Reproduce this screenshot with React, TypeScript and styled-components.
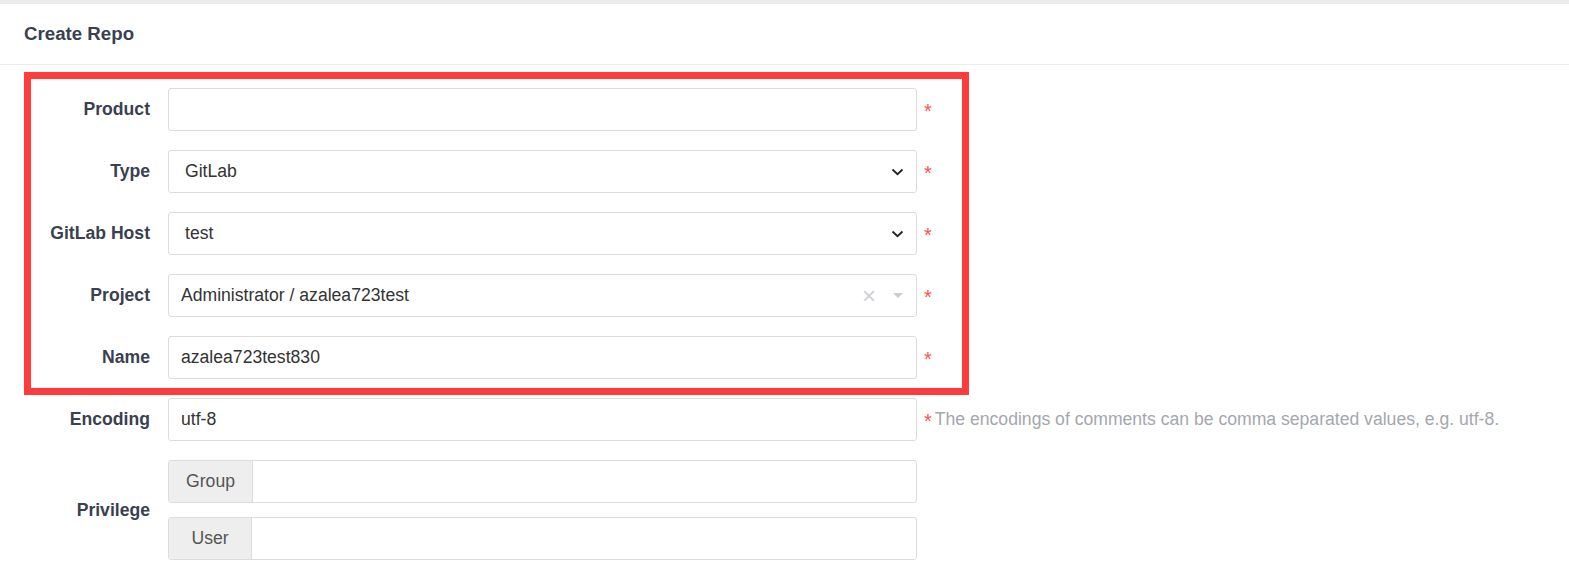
import styled, { createGlobalStyle } from "styled-components";

const GlobalStyle = createGlobalStyle`
  body {
    margin: 0;
    background: #fff;
    font-family: "Liberation Sans", Arial, sans-serif;
    color: #333;
  }
`;

const TopBar = styled.div`
  height: 4px;
  background: #ececec;
`;

const Header = styled.div`
  height: 60px;
  padding: 0 24px;
  display: flex;
  align-items: center;
  border-bottom: 1px solid #ececec;
  font-size: 18.7px;
  font-weight: bold;
  color: #3a3f51;
`;

const FormArea = styled.div`
  position: relative;
  padding-top: 23px;
  display: flex;
  flex-direction: column;
  gap: 19px;
`;

const Highlight = styled.div`
  position: absolute;
  left: 24px;
  top: 7px;
  width: 931px;
  height: 309px;
  border: 7px solid #ff3b3b;
  pointer-events: none;
`;

const Row = styled.div`
  display: grid;
  grid-template-columns: 150px 749px auto;
  column-gap: 18px;
  align-items: center;
`;

const Label = styled.label`
  text-align: right;
  font-size: 17.6px;
  font-weight: bold;
  color: #3a3f51;
`;

const Field = styled.div<{ $pad?: number }>`
  height: 43px;
  box-sizing: border-box;
  border: 1px solid #dcdcdc;
  border-radius: 3px;
  background: #fff;
  display: flex;
  align-items: center;
  padding: 0 12px 0 ${p => p.$pad ?? 12}px;
  font-size: 17.6px;
  color: #333;
`;

const Value = styled.span`
  flex: 1;
`;

const Side = styled.div`
  display: flex;
  align-items: center;
  gap: 3px;
  margin-left: -11px;
  font-size: 17.6px;
  color: #a4a7ae;
`;

const Star = styled.span`
  color: #ff4f4f;
  font-size: 20px;
  line-height: 1;
  margin-top: 3px;
`;

const Clear = styled.span`
  color: #cdcfd3;
  font-size: 24px;
  line-height: 1;
  margin-right: 17px;
`;

const Caret = styled.span`
  width: 0;
  height: 0;
  border-left: 5px solid transparent;
  border-right: 5px solid transparent;
  border-top: 5px solid #c8cbd2;
  margin-right: 1px;
`;

const Stack = styled.div`
  display: flex;
  flex-direction: column;
  gap: 14px;
`;

const Group = styled.div`
  height: 43px;
  box-sizing: border-box;
  border: 1px solid #dcdcdc;
  border-radius: 3px;
  display: flex;
  overflow: hidden;
`;

const Addon = styled.div<{ $w: number }>`
  width: ${p => p.$w}px;
  background: #eeeeee;
  border-right: 1px solid #dcdcdc;
  display: flex;
  align-items: center;
  justify-content: center;
  font-size: 17.6px;
  color: #555;
`;

const Chevron = () => (
  <svg width="13" height="8" viewBox="0 0 13 8">
    <path d="M1.5 1.5 L6.5 6.2 L11.5 1.5" fill="none" stroke="#222" strokeWidth="1.8" />
  </svg>
);

const Required = ({ note }: { note?: string }) => (
  <Side>
    <Star>*</Star>
    {note && <span>{note}</span>}
  </Side>
);

export default function App() {
  return (
    <>
      <GlobalStyle />
      <TopBar />
      <Header>Create Repo</Header>
      <FormArea>
        <Row>
          <Label>Product</Label>
          <Field />
          <Required />
        </Row>
        <Row>
          <Label>Type</Label>
          <Field $pad={16}>
            <Value>GitLab</Value>
            <Chevron />
          </Field>
          <Required />
        </Row>
        <Row>
          <Label>GitLab Host</Label>
          <Field $pad={16}>
            <Value>test</Value>
            <Chevron />
          </Field>
          <Required />
        </Row>
        <Row>
          <Label>Project</Label>
          <Field>
            <Value>Administrator / azalea723test</Value>
            <Clear>×</Clear>
            <Caret />
          </Field>
          <Required />
        </Row>
        <Row>
          <Label>Name</Label>
          <Field>
            <Value>azalea723test830</Value>
          </Field>
          <Required />
        </Row>
        <Row>
          <Label>Encoding</Label>
          <Field>
            <Value>utf-8</Value>
          </Field>
          <Required note="The encodings of comments can be comma separated values, e.g. utf-8." />
        </Row>
        <Row>
          <Label>Privilege</Label>
          <Stack>
            <Group>
              <Addon $w={83}>Group</Addon>
            </Group>
            <Group>
              <Addon $w={82}>User</Addon>
            </Group>
          </Stack>
        </Row>
        <Highlight />
      </FormArea>
    </>
  );
}
